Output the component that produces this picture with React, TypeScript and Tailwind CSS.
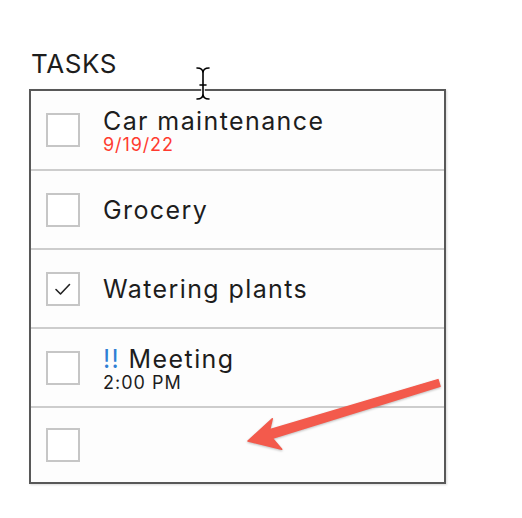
import React from "react";

const font = { fontFamily: "Inter, 'Noto Sans', sans-serif" };

function Box({ checked }: { checked?: boolean }) {
  return (
    <div className="w-[34px] h-[34px] border-2 border-[#c6c6c6] bg-white flex items-center justify-center shrink-0">
      {checked && (
        <svg width="20" height="16" viewBox="0 0 20 16">
          <path d="M3 8.5 L7.5 13 L16.5 3.5" fill="none" stroke="#222" strokeWidth="1.6" strokeLinecap="round" strokeLinejoin="round" />
        </svg>
      )}
    </div>
  );
}

export default function App() {
  return (
    <div className="relative w-[522px] h-[518px] bg-white text-[#1d1d1d]" style={font}>
      <div className="pl-[31px] pt-[49px] h-[89px] text-[26px] leading-[29px] tracking-[0.6px]">TASKS</div>
      <div className="ml-[29px] w-[417px] h-[395px] border-2 border-[#585858] bg-[#fdfdfd] flex flex-col shadow-[1px_1px_2px_rgba(0,0,0,0.15)]">
        <div className="h-[80px] border-b-2 border-[#cdcdcd] flex items-center pl-[15px] gap-[23px]">
          <Box />
          <div className="flex flex-col pt-[2px]">
            <div className="text-[25px] leading-[28px] tracking-[1.4px]">Car maintenance</div>
            <div className="text-[18px] leading-[20px] tracking-[0.9px] text-[#ff3b30]">9/19/22</div>
          </div>
        </div>
        <div className="h-[79px] border-b-2 border-[#cdcdcd] flex items-center pl-[15px] gap-[23px]">
          <Box />
          <div className="text-[25px] leading-[28px] tracking-[1.4px]">Grocery</div>
        </div>
        <div className="h-[79px] border-b-2 border-[#cdcdcd] flex items-center pl-[15px] gap-[23px]">
          <Box checked />
          <div className="text-[25px] leading-[28px] tracking-[1.4px]">Watering plants</div>
        </div>
        <div className="h-[79px] border-b-2 border-[#cdcdcd] flex items-center pl-[15px] gap-[23px]">
          <Box />
          <div className="flex flex-col pt-[2px]">
            <div className="text-[25px] leading-[28px] tracking-[1.4px]">
              <span className="text-[#2f7fd4]">!!</span> Meeting
            </div>
            <div className="text-[18px] leading-[20px] tracking-[1px]">2:00 PM</div>
          </div>
        </div>
        <div className="flex-1 flex items-center pl-[15px]">
          <Box />
        </div>
      </div>

      {/* text cursor */}
      <svg className="absolute left-0 top-0 pointer-events-none" width="522" height="518">
        <g fill="none" strokeLinecap="round">
          <path d="M197 68 Q203 68 203 73 Q203 68 209 68 M203 73 L203 94 M203 94 Q203 99 197 99 M203 94 Q203 99 209 99 M200 85 L206 85" stroke="#fff" strokeWidth="3.5" />
          <path d="M197 68 Q203 68 203 73 Q203 68 209 68 M203 73 L203 94 M203 94 Q203 99 197 99 M203 94 Q203 99 209 99 M200 85 L206 85" stroke="#000" strokeWidth="1.6" />
        </g>
        {/* red arrow */}
        <polygon
          points="438,379.6 269.7,429.7 272.3,418.7 248,441 281.7,449.3 272.3,438.3 440,386.3"
          fill="#f35a4c"
          stroke="#f35a4c"
          strokeWidth="1.5"
          strokeLinejoin="round"
          style={{ filter: "drop-shadow(0 1px 1px rgba(0,0,0,0.25))" }}
        />
      </svg>
    </div>
  );
}
